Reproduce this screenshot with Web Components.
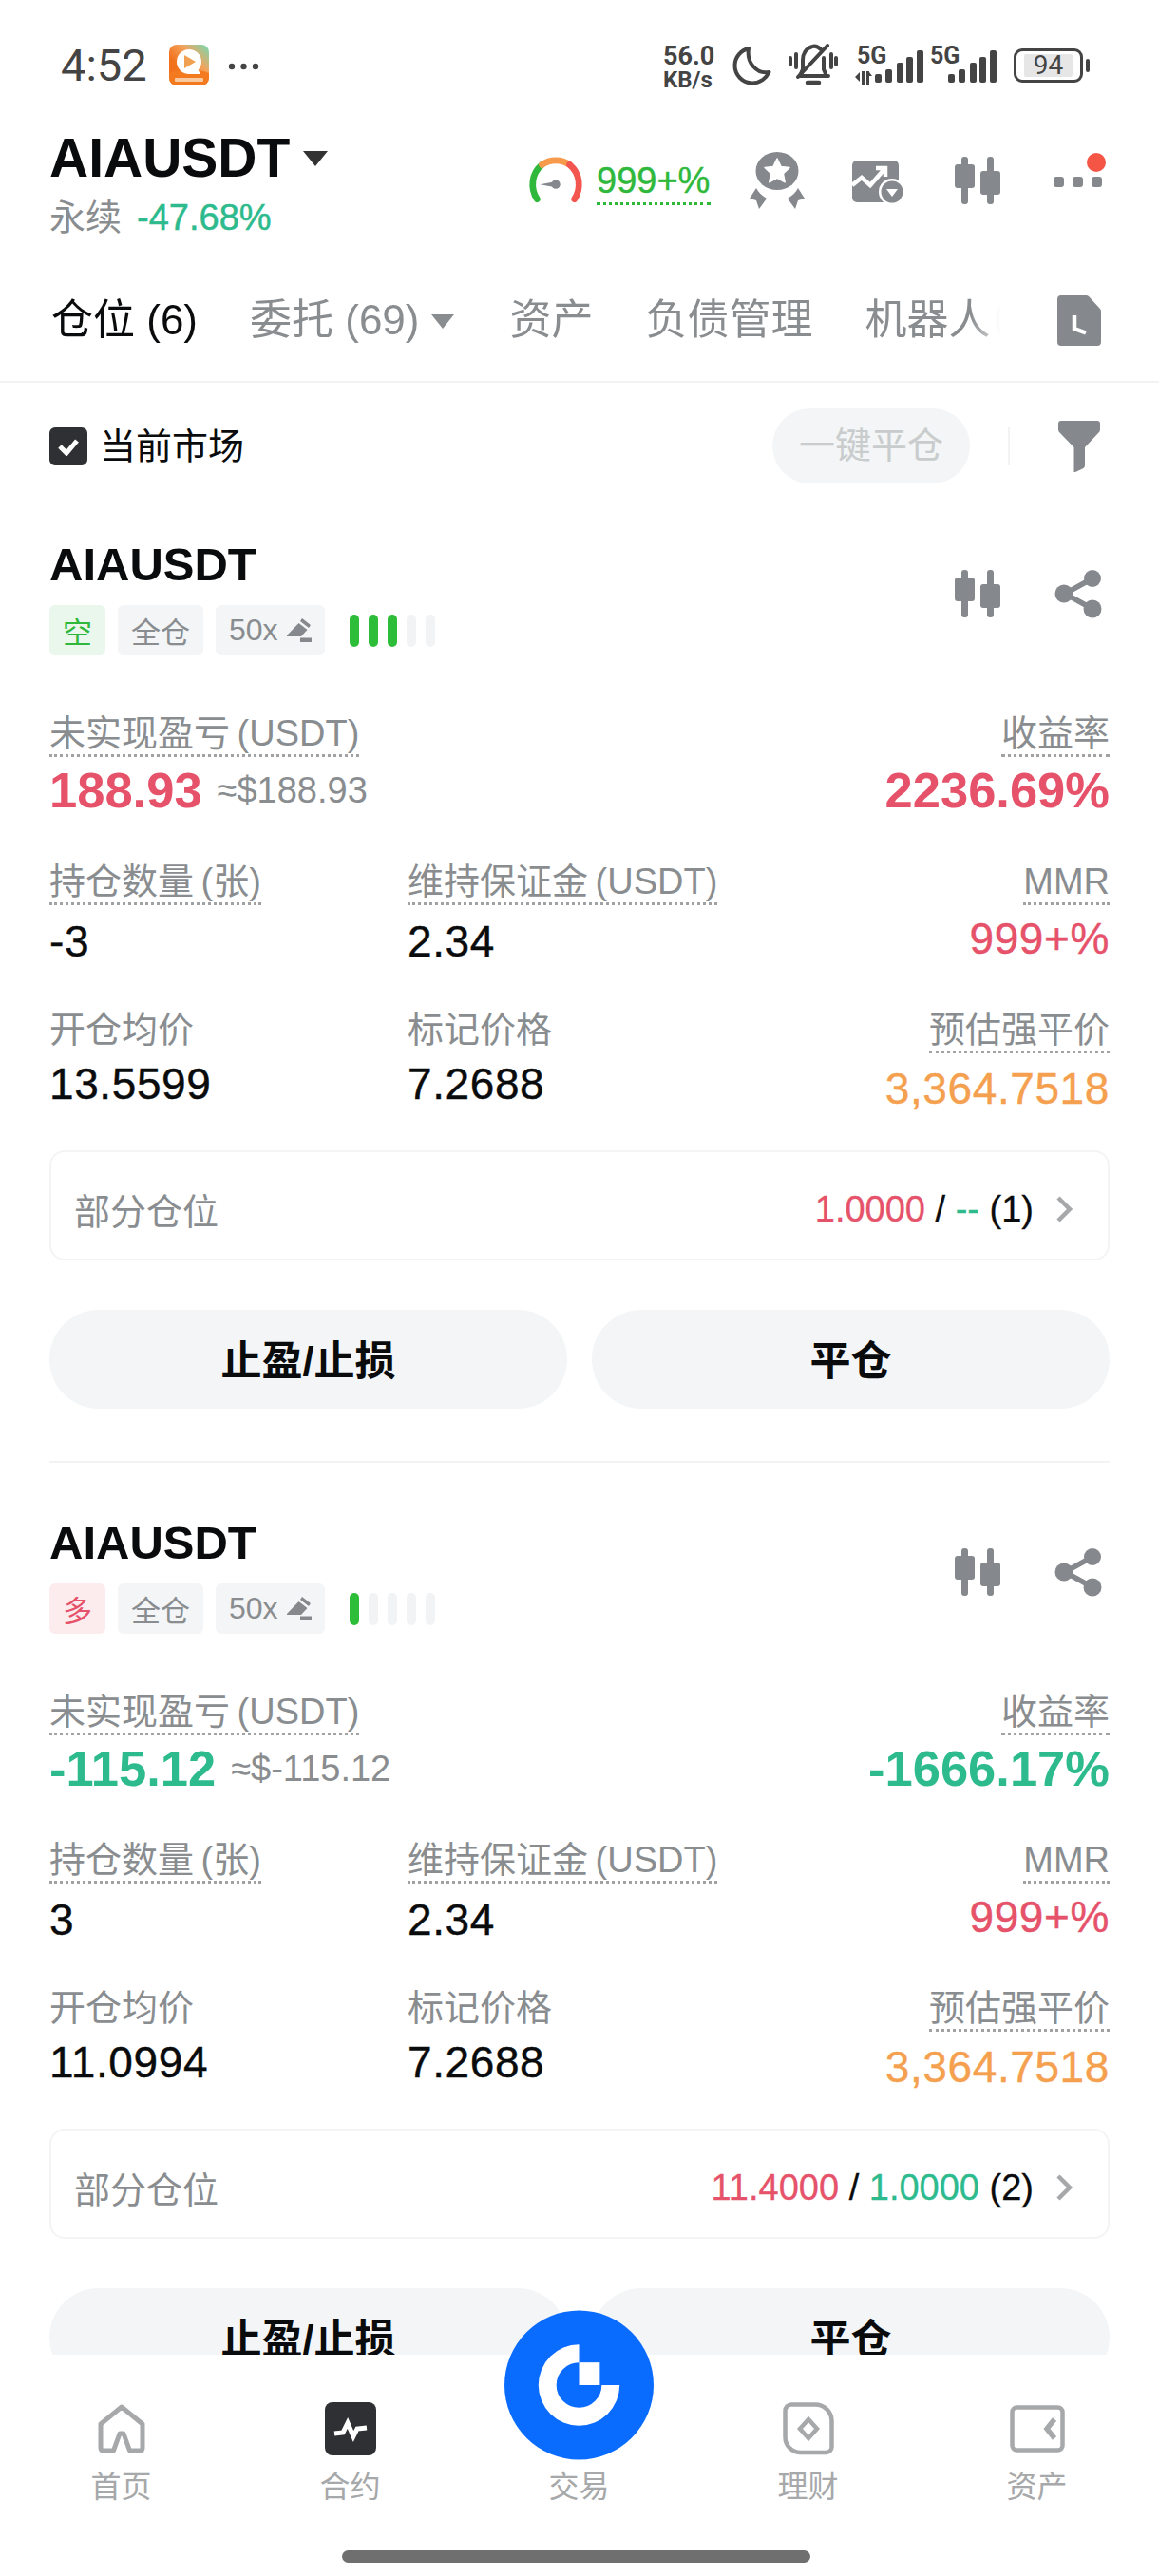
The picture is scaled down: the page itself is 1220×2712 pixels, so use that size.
<!DOCTYPE html>
<html lang="zh">
<head>
<meta charset="utf-8">
<title>AIAUSDT</title>
<style>
  html, body { margin: 0; padding: 0; background: #fff; }
  body { font-family: "Liberation Sans", "Noto Sans CJK SC", sans-serif; color: #0a0b0c; }
  .red { color: #e5526a; }
  .green { color: #2dba8d; }
</style>
</head>
<body>
<app-shell>
  <status-bar></status-bar>
  <market-header symbol="AIAUSDT" change="-47.68%" margin="999+%"></market-header>
  <tab-bar></tab-bar>
  <filter-row></filter-row>
  <position-list>
    <position-card symbol="AIAUSDT" side="short" side-text="空" risk="3">
      <stat-cell wide big label="未实现盈亏" unit="(USDT)" tone="red" note="≈$188.93">188.93</stat-cell>
      <stat-cell big right label="收益率" tone="red">2236.69%</stat-cell>
      <stat-cell label="持仓数量" unit="(张)" dotted>-3</stat-cell>
      <stat-cell label="维持保证金" unit="(USDT)" dotted>2.34</stat-cell>
      <stat-cell right label="MMR" tone="red">999+%</stat-cell>
      <stat-cell plain tight label="开仓均价">13.5599</stat-cell>
      <stat-cell plain tight label="标记价格">7.2688</stat-cell>
      <stat-cell right tight label="预估强平价" tone="orange">3,364.7518</stat-cell>
      <partial-row slot="partial"><span class="red">1.0000</span> / <span class="green">--</span> (1)</partial-row>
    </position-card>
    <position-card symbol="AIAUSDT" side="long" side-text="多" risk="1">
      <stat-cell wide big label="未实现盈亏" unit="(USDT)" tone="green" note="≈$-115.12">-115.12</stat-cell>
      <stat-cell big right label="收益率" tone="green">-1666.17%</stat-cell>
      <stat-cell label="持仓数量" unit="(张)" dotted>3</stat-cell>
      <stat-cell label="维持保证金" unit="(USDT)" dotted>2.34</stat-cell>
      <stat-cell right label="MMR" tone="red">999+%</stat-cell>
      <stat-cell plain tight label="开仓均价">11.0994</stat-cell>
      <stat-cell plain tight label="标记价格">7.2688</stat-cell>
      <stat-cell right tight label="预估强平价" tone="orange">3,364.7518</stat-cell>
      <partial-row slot="partial"><span class="red">11.4000</span> / <span class="green">1.0000</span> (2)</partial-row>
    </position-card>
  </position-list>
  <bottom-nav></bottom-nav>
</app-shell>

<script>
const GREY = '#85888c';
const ICONS = {
  candle: `<svg viewBox="0 0 50 50" width="50" height="50" fill="${GREY}">
    <rect x="8" y="0" width="7" height="50" rx="3"/><rect x="1" y="8" width="21" height="25" rx="3"/>
    <rect x="35" y="0" width="7" height="50" rx="3"/><rect x="28" y="15" width="21" height="25" rx="3"/></svg>`,
  share: `<svg viewBox="0 0 50 52" width="50" height="52" fill="${GREY}" stroke="${GREY}">
    <path d="M40 10 11 26l29 16" fill="none" stroke-width="5.5"/>
    <circle cx="40" cy="10" r="9" stroke="none"/><circle cx="10" cy="26" r="9.5" stroke="none"/><circle cx="40" cy="42" r="9.5" stroke="none"/></svg>`,
  medal: `<svg viewBox="0 0 58 60" width="58" height="60">
    <ellipse cx="29" cy="20" rx="22.5" ry="20" fill="${GREY}"/>
    <path d="M29 7l4 8.400 9 1.100-6.600 6.200 1.800 9.100L29 27.400 20.800 31.800l1.800-9.100L16 16.500l9-1.100z" fill="#fff" stroke="#fff" stroke-linejoin="round" stroke-width="1.500"/>
    <path d="M7 38 0 49l7 2 3 9 8-11C13 46 9 42 7 38zM51 38l7 11-7 2-3 9-8-11c5-3 9-7 11-11z" fill="${GREY}"/></svg>`,
  chart: `<svg viewBox="0 0 56 50" width="56" height="50">
    <rect x="0" y="0" width="49" height="44" rx="5" fill="${GREY}"/>
    <path d="M0 26l10-8 9 8 15-17M25 8h10v9" fill="none" stroke="#fff" stroke-width="4.500"/>
    <circle cx="42" cy="33" r="14" fill="#fff"/><circle cx="42" cy="33" r="11.500" fill="${GREY}"/>
    <path d="M36 30h12l-6 8z" fill="#fff"/></svg>`,
  doc: `<svg viewBox="0 0 46 53" width="46" height="53">
    <path d="M4 0h26c1.500 0 2.500.5 3.500 1.500l11 12c1 1 1.500 2 1.500 3.500V49a4 4 0 0 1-4 4H4a4 4 0 0 1-4-4V4a4 4 0 0 1 4-4z" fill="${GREY}"/>
    <path d="M18 21v14l12 4.500" fill="none" stroke="#fff" stroke-width="4.500"/></svg>`,
  filter: `<svg viewBox="0 0 44 54" width="44" height="54">
    <path d="M3 0h38a3 3 0 0 1 3 3v6c0 1.500-.5 2.500-1.500 3.500L28 28v19c0 1.500-.8 2.500-2 3.300L18 54h-1.500V28L1.500 12.500C.5 11.500 0 10.500 0 9V3a3 3 0 0 1 3-3z" fill="${GREY}"/></svg>`,
  pencil: `<svg viewBox="0 0 26 25" width="26" height="25" fill="${GREY}">
    <path d="M16 0l9 7-2 3-9-7zM12.500 5l9 7-6.500 7H0v-1z"/><rect x="14" y="20.500" width="12" height="4.500"/></svg>`,
  chevron: `<svg viewBox="0 0 18 30" width="18" height="30"><path d="M2 3l12 12L2 27" fill="none" stroke="#a6a8aa" stroke-width="4.500"/></svg>`,
  home: `<svg viewBox="0 0 52 52" width="52" height="52"><path d="M26 3 4 21v25c0 2 1 3 3 3h10.500L24 31h4l6.500 18H45c2 0 3-1 3-3V21z" fill="none" stroke="#a6a8aa" stroke-width="5" stroke-linejoin="round"/></svg>`,
  contract: `<svg viewBox="0 0 54 56" width="54" height="56"><rect width="54" height="56" rx="8" fill="#2f3033"/>
    <path d="M10 33l9-1 5-10 6 14 4-8 10-1" fill="none" stroke="#fff" stroke-width="5"/></svg>`,
  finance: `<svg viewBox="0 0 54 56" width="54" height="56"><path d="M9 2.500h25c10 0 17.500 8 17.500 17V47a6 6 0 0 1-6 6H19C10 53 2.500 46 2.500 37V9A6.500 6.500 0 0 1 9 2.500z" fill="none" stroke="#a6a8aa" stroke-width="4.500"/>
    <path d="M27 18l9 10-9 10-9-10z" fill="none" stroke="#a6a8aa" stroke-width="4.500"/></svg>`,
  assets: `<svg viewBox="0 0 58 50" width="58" height="50"><rect x="2.500" y="2.500" width="53" height="45" rx="5" fill="none" stroke="#a6a8aa" stroke-width="4.500"/>
    <path d="M47 15l-8 10 8 10" fill="none" stroke="#a6a8aa" stroke-width="5.500"/></svg>`
};

class UiIcon extends HTMLElement {
  connectedCallback() {
    this.attachShadow({ mode: 'open' });
    this.shadowRoot.innerHTML = `
      <style>:host { display: inline-flex; flex: none; } svg { display: block; }</style>
      ${ICONS[this.getAttribute('name')] || ''}`;
  }
}
customElements.define('ui-icon', UiIcon);

class AppShell extends HTMLElement {
  connectedCallback() {
    this.attachShadow({ mode: 'open' });
    this.shadowRoot.innerHTML = `
      <style>
        :host { display: flex; flex-direction: column; width: 1220px; height: 2712px; overflow: hidden; background: #fff; }
      </style>
      <slot></slot>`;
  }
}
customElements.define('app-shell', AppShell);

class StatusBar extends HTMLElement {
  connectedCallback() {
    this.attachShadow({ mode: 'open' });
    const bars = [[0,30,9],[11,25,14],[23,18,21],[33,12,27],[44,5,34]].map(([x, y, h]) =>
      `<rect x="${x}" y="${y}" width="7" height="${h}" rx="2"/>`).join('');
    this.shadowRoot.innerHTML = `
      <style>
        :host { display: flex; flex: none; height: 136px; align-items: center; padding: 0 73px 0 64px; font-family: Roboto, "Liberation Sans", sans-serif; color: #444; box-sizing: border-box; }
        .time { font-size: 47px; width: 91px; line-height: 50px; margin-top: 2px; }
        .app { margin-left: 23px; display: block; }
        .more { margin-left: 20px; display: block; margin-top: 3px; }
        .right { margin-left: auto; display: flex; align-items: center; margin-top: 2px; }
        .speed { width: 57px; font-weight: 700; margin-top: 6px; margin-left: -2px; margin-right: 2px; }
        .speed div { height: 25px; line-height: 25px; white-space: nowrap; }
        .speed div:first-child { font-size: 27px; }
        .speed div:last-child { font-size: 24px; }
        svg { display: block; flex: none; }
        .moon { margin-left: 14px; }
        .bell { margin-left: 18px; }
        .sim1 { margin-left: 18px; }
        .sim2 { margin-left: 7px; }
        .battery { margin-left: 17px; display: flex; align-items: center; gap: 3px; }
        .cell { width: 73px; height: 36px; border: 3px solid #444; border-radius: 9px; box-sizing: border-box; padding: 3px 5px; }
        .level { height: 100%; background: #e6e6e6; border-radius: 2px; width: 88%; font-size: 28px; line-height: 24px; text-align: center; margin: 0 auto; }
        .nub { width: 4px; height: 14px; background: #444; border-radius: 2px; }
      </style>
      <span class="time">4:52</span>
      <svg class="app" width="42" height="43" viewBox="0 0 42 43">
        <defs><linearGradient id="g" x1="0" y1="1" x2="1" y2="0"><stop offset=".35" stop-color="#f2711c"/><stop offset=".65" stop-color="#f3a35c"/><stop offset="1" stop-color="#6fdcb6"/></linearGradient></defs>
        <rect width="42" height="43" rx="8" fill="url(#g)"/>
        <path d="M0 30q20-8 42 0v5a8 8 0 0 1-8 8H8a8 8 0 0 1-8-8z" fill="#f47a20"/>
        <circle cx="21" cy="18" r="13" fill="#fff"/><path d="M21 31h12l-4-7z" fill="#fff"/>
        <path d="M16 11l12 7-12 7z" fill="#f0a050"/>
        <rect x="6" y="35" width="30" height="4" rx="1" fill="#f9c9a0"/>
      </svg>
      <svg class="more" width="33" height="8" viewBox="0 0 33 8" fill="#444"><circle cx="4" cy="4" r="3.200"/><circle cx="16.500" cy="4" r="3.200"/><circle cx="29" cy="4" r="3.200"/></svg>
      <div class="right">
        <div class="speed"><div>56.0</div><div>KB/s</div></div>
        <svg class="moon" width="41" height="42" viewBox="0 0 41 42"><path d="M17 3C9 5 2.500 12 2.500 21c0 10 8 18.500 18.500 18.500 8 0 14.500-5 17.500-11.500-13 2.500-24-10-21.500-25z" fill="none" stroke="#444" stroke-width="4" stroke-linejoin="round"/></svg>
        <svg class="bell" width="52" height="46" viewBox="0 0 52 46" fill="none" stroke="#444" stroke-width="4" stroke-linecap="round">
          <path d="M34 6c-3-3-6-4-9-3-7 2-10 8-10 14v10l-3 7h30"/><path d="M37 15v12l3 7"/><path d="M20 41h12" stroke-width="4.500"/>
          <path d="M10 35 41 2" stroke-width="4"/><path d="M2 15v7M50 15v7M8 11v14M45 11v14"/>
        </svg>
        <svg class="sim1" width="72" height="50" viewBox="0 -8 72 50" fill="#444" style="margin-top:-8px">
          <text x="2" y="19" font-family="Roboto, sans-serif" font-weight="700" font-size="25">5G</text>
          <g transform="translate(21 0)">${bars}</g>
          <path d="M0 33l5-5v10zM7 27h3v15H7zM12 27h3v15h-3zM15 28l3 4h-3z"/>
        </svg>
        <svg class="sim2" width="71" height="50" viewBox="0 -8 71 50" fill="#444" style="margin-top:-8px">
          <text x="0" y="19" font-family="Roboto, sans-serif" font-weight="700" font-size="25">5G</text>
          <g transform="translate(19 0)">${bars}</g>
        </svg>
        <div class="battery"><div class="cell"><div class="level">94</div></div><div class="nub"></div></div>
      </div>`;
  }
}
customElements.define('status-bar', StatusBar);

class MarketHeader extends HTMLElement {
  connectedCallback() {
    this.attachShadow({ mode: 'open' });
    this.shadowRoot.innerHTML = `
      <style>
        :host { display: flex; flex: none; height: 147px; padding: 0 60px 0 52px; box-sizing: border-box; font-family: "Liberation Sans", "Noto Sans CJK SC", sans-serif; justify-content: space-between; }
        .title { display: flex; align-items: center; gap: 14px; font-size: 57px; font-weight: 700; line-height: 60px; color: #0a0b0c; }
        .arrow { width: 0; height: 0; border: 13px solid transparent; border-top: 16px solid #333; border-bottom: 0; margin-top: 2px; }
        .sub { display: flex; gap: 16px; margin-top: 11px; line-height: 44px; font-size: 38px; color: #8a8d90; }
        .sub span:first-child { font-size: 38px; }
        .sub span:last-child { color: #2dba8d; -webkit-text-stroke: .5px currentColor; }
        .tools { display: flex; align-items: center; height: 94px; margin-top: 7px; }
        .gauge { display: block; margin-right: 14px; }
        .pct { font-size: 38px; color: #2fb83c; line-height: 46px; border-bottom: 3px dotted #2fb83c; margin-top: 2px; width: 120px; white-space: nowrap; -webkit-text-stroke: .4px currentColor; }
        .medal { margin-left: 41px; }
        .chart { margin-left: 50px; margin-top: 7px; }
        .candle { margin-left: 51px; }
        .dots { margin-left: 55px; display: flex; gap: 9px; position: relative; margin-top: 2px; }
        .dots i { width: 11px; height: 11px; background: ${GREY}; border-radius: 3px; }
        .badge { position: absolute; right: -4px; top: -25px; width: 20px; height: 20px; border-radius: 50%; background: #f55545; }
      </style>
      <div>
        <div class="title"><span>${this.getAttribute('symbol')}</span><span class="arrow"></span></div>
        <div class="sub"><span>永续</span><span>${this.getAttribute('change')}</span></div>
      </div>
      <div class="tools">
        <svg class="gauge" width="58" height="52" viewBox="0 0 56 50" fill="none" stroke-width="6.500" stroke-linecap="round">
          <path d="M9 44C2 33 3 18 14 9" stroke="#2fb83c"/>
          <path d="M14 9c8-6 20-6 28 0" stroke="#f79a4b"/>
          <path d="M42 9c11 9 12 24 5 35" stroke="#f2564f"/>
          <path d="M12 29l16-3v6z" fill="#85888c" stroke="none"/><circle cx="28" cy="29" r="4.500" fill="#85888c" stroke="none"/>
        </svg>
        <span class="pct">${this.getAttribute('margin')}</span>
        <ui-icon class="medal" name="medal"></ui-icon>
        <ui-icon class="chart" name="chart"></ui-icon>
        <ui-icon class="candle" name="candle"></ui-icon>
        <div class="dots"><i></i><i></i><i></i><span class="badge"></span></div>
      </div>`;
  }
}
customElements.define('market-header', MarketHeader);

class TabBar extends HTMLElement {
  connectedCallback() {
    this.attachShadow({ mode: 'open' });
    this.shadowRoot.innerHTML = `
      <style>
        :host { display: flex; flex: none; height: 120px; align-items: center; padding: 0 61px 10px 54px; box-sizing: border-box; border-bottom: 2px solid #f2f3f4; font-family: "Liberation Sans", "Noto Sans CJK SC", sans-serif; font-size: 44px; color: #8a8d90; }
        .list { flex: 1; min-width: 0; display: flex; gap: 55px; white-space: nowrap; overflow: hidden; line-height: 56px; -webkit-mask-image: linear-gradient(to right, #000 96%, transparent 100%); mask-image: linear-gradient(to right, #000 96%, transparent 100%); }
        .on { color: #0a0b0c; }
        .drop { display: flex; align-items: center; gap: 13px; margin-right: 3px; }
        .drop i { width: 0; height: 0; border: 12px solid transparent; border-top: 15px solid #8a8d90; border-bottom: 0; margin-top: 2px; }
        .peek { width: 4px; height: 30px; margin-left: 8px; border-left: 2px solid #e6e7e8; border-radius: 50%; align-self: center; flex: none; }
        ui-icon { margin-left: 51px; }
      </style>
      <div class="list">
        <span class="on">仓位 (6)</span>
        <span class="drop"><span>委托 (69)</span><i></i></span>
        <span>资产</span>
        <span>负债管理</span>
        <span style="display:flex">机器人<i class="peek"></i></span>
      </div>
      <ui-icon name="doc"></ui-icon>`;
  }
}
customElements.define('tab-bar', TabBar);

class FilterRow extends HTMLElement {
  connectedCallback() {
    this.attachShadow({ mode: 'open' });
    this.shadowRoot.innerHTML = `
      <style>
        :host { display: flex; flex: none; align-items: center; height: 79px; padding: 27px 62px 1px 52px; font-family: "Liberation Sans", "Noto Sans CJK SC", sans-serif; font-size: 38px; color: #0a0b0c; }
        .box { width: 40px; height: 40px; border-radius: 6px; background: #2f3033; display: flex; align-items: center; justify-content: center; }
        .label { margin-left: 13px; line-height: 44px; }
        .all { margin-left: auto; width: 208px; height: 79px; border-radius: 40px; background: #f3f5f6; color: #c9cccd; text-align: center; line-height: 79px; }
        .split { width: 2px; height: 40px; background: #f2f3f4; margin: 0 51px 0 40px; }
      </style>
      <span class="box"><svg width="24" height="20" viewBox="0 0 24 20"><path d="M3 10l7 7L21 4" fill="none" stroke="#fff" stroke-width="5"/></svg></span>
      <span class="label">当前市场</span>
      <span class="all">一键平仓</span>
      <span class="split"></span>
      <ui-icon name="filter"></ui-icon>`;
  }
}
customElements.define('filter-row', FilterRow);

class PositionList extends HTMLElement {
  connectedCallback() {
    this.attachShadow({ mode: 'open' });
    this.shadowRoot.innerHTML = `
      <style>:host { display: block; flex: 1; min-height: 0; overflow: hidden; padding: 0 52px; }</style>
      <slot></slot>`;
  }
}
customElements.define('position-list', PositionList);

class PositionCard extends HTMLElement {
  connectedCallback() {
    this.attachShadow({ mode: 'open' });
    const side = this.getAttribute('side');
    const risk = Number(this.getAttribute('risk'));
    const meter = [0, 1, 2, 3, 4].map(i => `<i class="${i < risk ? 'on' : ''}"></i>`).join('');
    this.shadowRoot.innerHTML = `
      <style>
        :host { display: block; height: 1030px; box-sizing: border-box; padding-top: 56px; border-bottom: 2px solid #f2f3f4; font-family: "Liberation Sans", "Noto Sans CJK SC", sans-serif; }
        .head { display: flex; justify-content: space-between; height: 56px; }
        .symbol { font-size: 49px; font-weight: 700; line-height: 56px; color: #0a0b0c; }
        .head-icons { display: flex; align-items: center; gap: 56px; padding-right: 8px; height: 52px; margin-top: 33px; }
        .tags { display: flex; align-items: center; gap: 13px; margin-top: 15px; height: 53px; }
        .tag { height: 53px; padding: 0 14px; border-radius: 6px; background: #f3f5f6; color: #8a8d90; font-size: 31px; display: flex; align-items: center; gap: 9px; box-sizing: border-box; }
        .tag.lev { font-size: 32px; }
        .short { background: #e9f7ec; color: #2fb83c; }
        .long { background: #fdecee; color: #e5526a; }
        .meter { display: flex; gap: 10px; margin-left: 13px; }
        .meter i { width: 10px; height: 34px; border-radius: 5px; background: #f2f3f4; }
        .meter i.on { background: #2ebd38; }
        .stats { display: grid; grid-template-columns: 377px 1fr auto; row-gap: 45px; margin-top: 60px; }
        .actions { display: flex; gap: 26px; margin-top: 52px; }
        .actions span { flex: 1; height: 104px; padding-bottom: 4px; box-sizing: border-box; border-radius: 52px; background: #f3f5f6; font-size: 43px; font-weight: 700; color: #0a0b0c; display: flex; align-items: center; justify-content: center; }
        .partial { margin-top: 38px; }
      </style>
      <div class="head">
        <div class="symbol">${this.getAttribute('symbol')}</div>
        <div class="head-icons"><ui-icon name="candle"></ui-icon><ui-icon name="share"></ui-icon></div>
      </div>
      <div class="tags">
        <span class="tag ${side}">${this.getAttribute('side-text')}</span>
        <span class="tag">全仓</span>
        <span class="tag lev">50x<ui-icon name="pencil"></ui-icon></span>
        <span class="meter">${meter}</span>
      </div>
      <div class="stats"><slot></slot></div>
      <div class="partial"><slot name="partial"></slot></div>
      <div class="actions"><span>止盈/止损</span><span>平仓</span></div>`;
  }
}
customElements.define('position-card', PositionCard);

class StatCell extends HTMLElement {
  connectedCallback() {
    this.attachShadow({ mode: 'open' });
    const unit = this.getAttribute('unit');
    const note = this.getAttribute('note');
    this.shadowRoot.innerHTML = `
      <style>
        :host { display: flex; flex-direction: column; align-items: flex-start; min-width: 0; color: #0a0b0c; height: 111px; }
        :host([wide]) { grid-column: span 2; }
        :host([right]) { align-items: flex-end; }
        :host([tone="red"]) { color: #e5526a; }
        :host([tone="green"]) { color: #2dba8d; }
        :host([tone="orange"]) { color: #f5a04f; }
        .label { font-size: 38px; line-height: 44px; color: #8a8d90; border-bottom: 3px dotted #a0a2a4; white-space: nowrap; word-spacing: -3px; }
        :host([plain]) .label { border-bottom-color: transparent; }
        .value { display: flex; align-items: center; gap: 16px; font-size: 46px; line-height: 54px; margin-top: 11px; letter-spacing: .6px; -webkit-text-stroke: .4px currentColor; white-space: nowrap; }
        :host([tight]) .value { margin-top: 5px; }
        :host([tone="red"]) .value { margin-top: 8px; }
        :host([tone="orange"]) .value { margin-top: 10px; }
        :host([big]) .value { font-size: 52.500px; line-height: 60px; margin-top: 5px; font-weight: 700; letter-spacing: 0; -webkit-text-stroke: 0; }
        .note { font-size: 38px; font-weight: 400; color: #8a8d90; }
      </style>
      <span class="label">${this.getAttribute('label')}${unit ? ' ' + unit : ''}</span>
      <div class="value"><span><slot></slot></span>${note ? `<span class="note">${note}</span>` : ''}</div>`;
  }
}
customElements.define('stat-cell', StatCell);

class PartialRow extends HTMLElement {
  connectedCallback() {
    this.attachShadow({ mode: 'open' });
    this.shadowRoot.innerHTML = `
      <style>
        :host { display: flex; align-items: center; height: 116px; box-sizing: border-box; padding: 7px 36px 0 24px; border: 2px solid #f3f4f5; border-radius: 16px; font-size: 38px; font-family: "Liberation Sans", "Noto Sans CJK SC", sans-serif; color: #0a0b0c; }
        .name { color: #8a8d90; }
        .data { margin-left: auto; white-space: pre; -webkit-text-stroke: .3px currentColor; margin-top: 2px; }
        ui-icon { margin-left: 24px; }
      </style>
      <span class="name">部分仓位</span>
      <span class="data"><slot></slot></span>
      <ui-icon name="chevron"></ui-icon>`;
  }
}
customElements.define('partial-row', PartialRow);

class BottomNav extends HTMLElement {
  connectedCallback() {
    this.attachShadow({ mode: 'open' });
    const items = [['home', '首页'], ['contract', '合约'], ['', '交易'], ['finance', '理财'], ['assets', '资产']];
    this.shadowRoot.innerHTML = `
      <style>
        :host { display: block; flex: none; position: relative; height: 233px; background: #fff; font-family: "Liberation Sans", "Noto Sans CJK SC", sans-serif; }
        .items { display: grid; grid-template-columns: repeat(5, 241px); padding: 50px 0 0 7px; }
        .item { display: flex; flex-direction: column; align-items: center; font-size: 32px; line-height: 40px; color: #a6a8aa; }
        .slot { height: 56px; display: flex; align-items: center; justify-content: center; margin-bottom: 13px; }
        .fab { position: absolute; left: 531px; top: -47px; width: 157px; height: 158px; display: block; }
        .bar { width: 493px; height: 13px; border-radius: 7px; background: #6f6f6f; margin: 47px 0 0 360px; }
      </style>
      <div class="items">
        ${items.map(([icon, text]) => `<div class="item"><div class="slot">${icon ? `<ui-icon name="${icon}"></ui-icon>` : ''}</div><span>${text}</span></div>`).join('')}
      </div>
      <svg class="fab" viewBox="0 0 158 158">
        <circle cx="79" cy="79" r="79" fill="#0a6cff"/>
        <path d="M79 36A43 43 0 1 0 122 79H103A24 24 0 1 1 79 55z" fill="#fff"/>
        <rect x="79" y="55" width="22" height="24" fill="#fff"/>
      </svg>
      <div class="bar"></div>`;
  }
}
customElements.define('bottom-nav', BottomNav);
</script>
</body>
</html>
